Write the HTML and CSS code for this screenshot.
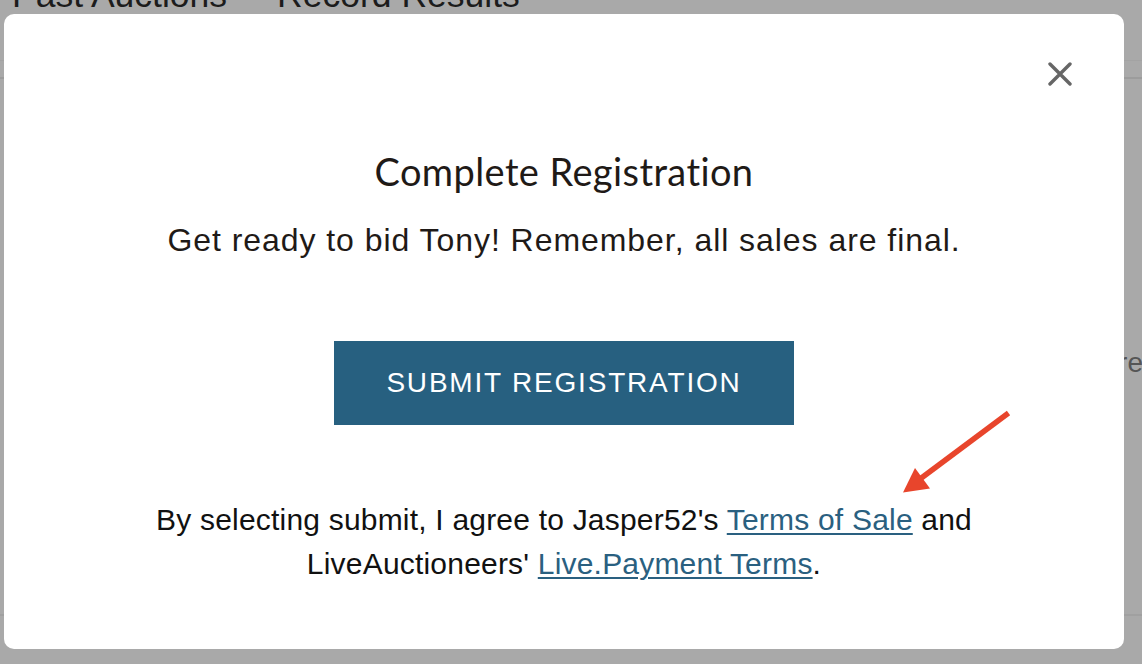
FILE: index.html
```html
<!DOCTYPE html>
<html>
<head>
<meta charset="utf-8">
<link rel="stylesheet" href="styles.css">
</head>
<body>
<div class="page">
  <nav class="tabs">
    <span class="tab">Past Auctions</span>
    <span class="tab">Record Results</span>
  </nav>
  <div class="rule-light"></div>
  <div class="rule-dark"></div>
  <div class="middle"><span class="side-text">re</span></div>
  <div class="rule-bottom"></div>
</div>

<div class="modal">
  <button class="close" aria-label="Close">
    <svg width="24" height="24" viewBox="0 0 24 24"><path d="M2 2 L22 22 M22 2 L2 22" stroke="#666" stroke-width="3.4" stroke-linecap="round" fill="none"/></svg>
  </button>
  <svg class="arrow" width="140" height="110" viewBox="0 0 140 110"><line x1="128.5" y1="13" x2="40" y2="79" stroke="#e8452c" stroke-width="5.5"/><polygon points="23,92.5 35,68 50,88.5" fill="#e8452c"/></svg>
  <h1 class="title">Complete Registration</h1>
  <p class="subtitle">Get ready to bid Tony! Remember, all sales are final.</p>
  <button class="submit">SUBMIT REGISTRATION</button>
  <p class="terms">By selecting submit, I agree to Jasper52's <a href="#">Terms of Sale</a> and<br>LiveAuctioneers' <a href="#">Live.Payment Terms</a>.</p>
</div>
</body>
</html>
```
FILE: styles.css
```css
html, body {
  margin: 0;
  padding: 0;
  height: 100%;
  overflow: hidden;
}
body {
  background: #a9a9a9;
  font-family: "Liberation Sans", Arial, sans-serif;
}
.page {
  height: 664px;
  display: flex;
  flex-direction: column;
}
.tabs {
  display: flex;
  gap: 50px;
  padding-left: 12px;
  margin-top: -25px;
  height: 85px;
  box-sizing: border-box;
}
.tab {
  font-size: 35.5px;
  line-height: 40px;
  color: #1c1c1c;
}
.rule-light {
  height: 1px;
  background: #a3a3a3;
}
.rule-dark {
  height: 2px;
  background: #9c9c9c;
  margin-top: 16px;
}
.middle {
  flex: 1;
  display: flex;
  justify-content: flex-end;
  padding-top: 266px;
}
.side-text {
  font-size: 28px;
  line-height: 36px;
  color: #555;
  margin-right: -1px;
  height: 36px;
}
.rule-bottom {
  height: 2px;
  background: #a0a0a0;
  margin-bottom: 48px;
}
.modal {
  position: fixed;
  left: 4px;
  top: 14px;
  width: 1120px;
  height: 635px;
  background: #fff;
  border-radius: 10px;
  box-sizing: border-box;
  display: flex;
  flex-direction: column;
  align-items: center;
  padding-top: 135px;
}
.close {
  position: absolute;
  top: 48px;
  right: 52px;
  width: 24px;
  height: 24px;
  padding: 0;
  border: 0;
  background: none;
  display: block;
}
.close svg { display: block; }
.arrow {
  position: absolute;
  left: 876px;
  top: 386px;
}
.title {
  margin: 0;
  font-family: Lato, "Liberation Sans", sans-serif;
  font-weight: 400;
  font-size: 38px;
  line-height: 44px;
  letter-spacing: 0.4px;
  color: #1f1a17;
}
.subtitle {
  margin: 29px 0 0;
  font-size: 32px;
  line-height: 36px;
  color: #1f1a17;
  letter-spacing: 0.95px;
}
.submit {
  margin-top: 83px;
  width: 460px;
  height: 84px;
  border: 0;
  background: #276080;
  color: #fff;
  font-family: "Liberation Sans", Arial, sans-serif;
  font-size: 28px;
  letter-spacing: 1.8px;
  padding: 0;
}
.terms {
  margin: 73px 0 0;
  text-align: center;
  font-size: 30px;
  line-height: 44px;
  letter-spacing: 0.2px;
  color: #111;
}
.terms a {
  color: #2a6080;
  text-decoration: underline;
  text-underline-offset: 3px;
  text-decoration-thickness: 1.5px;
}
```
